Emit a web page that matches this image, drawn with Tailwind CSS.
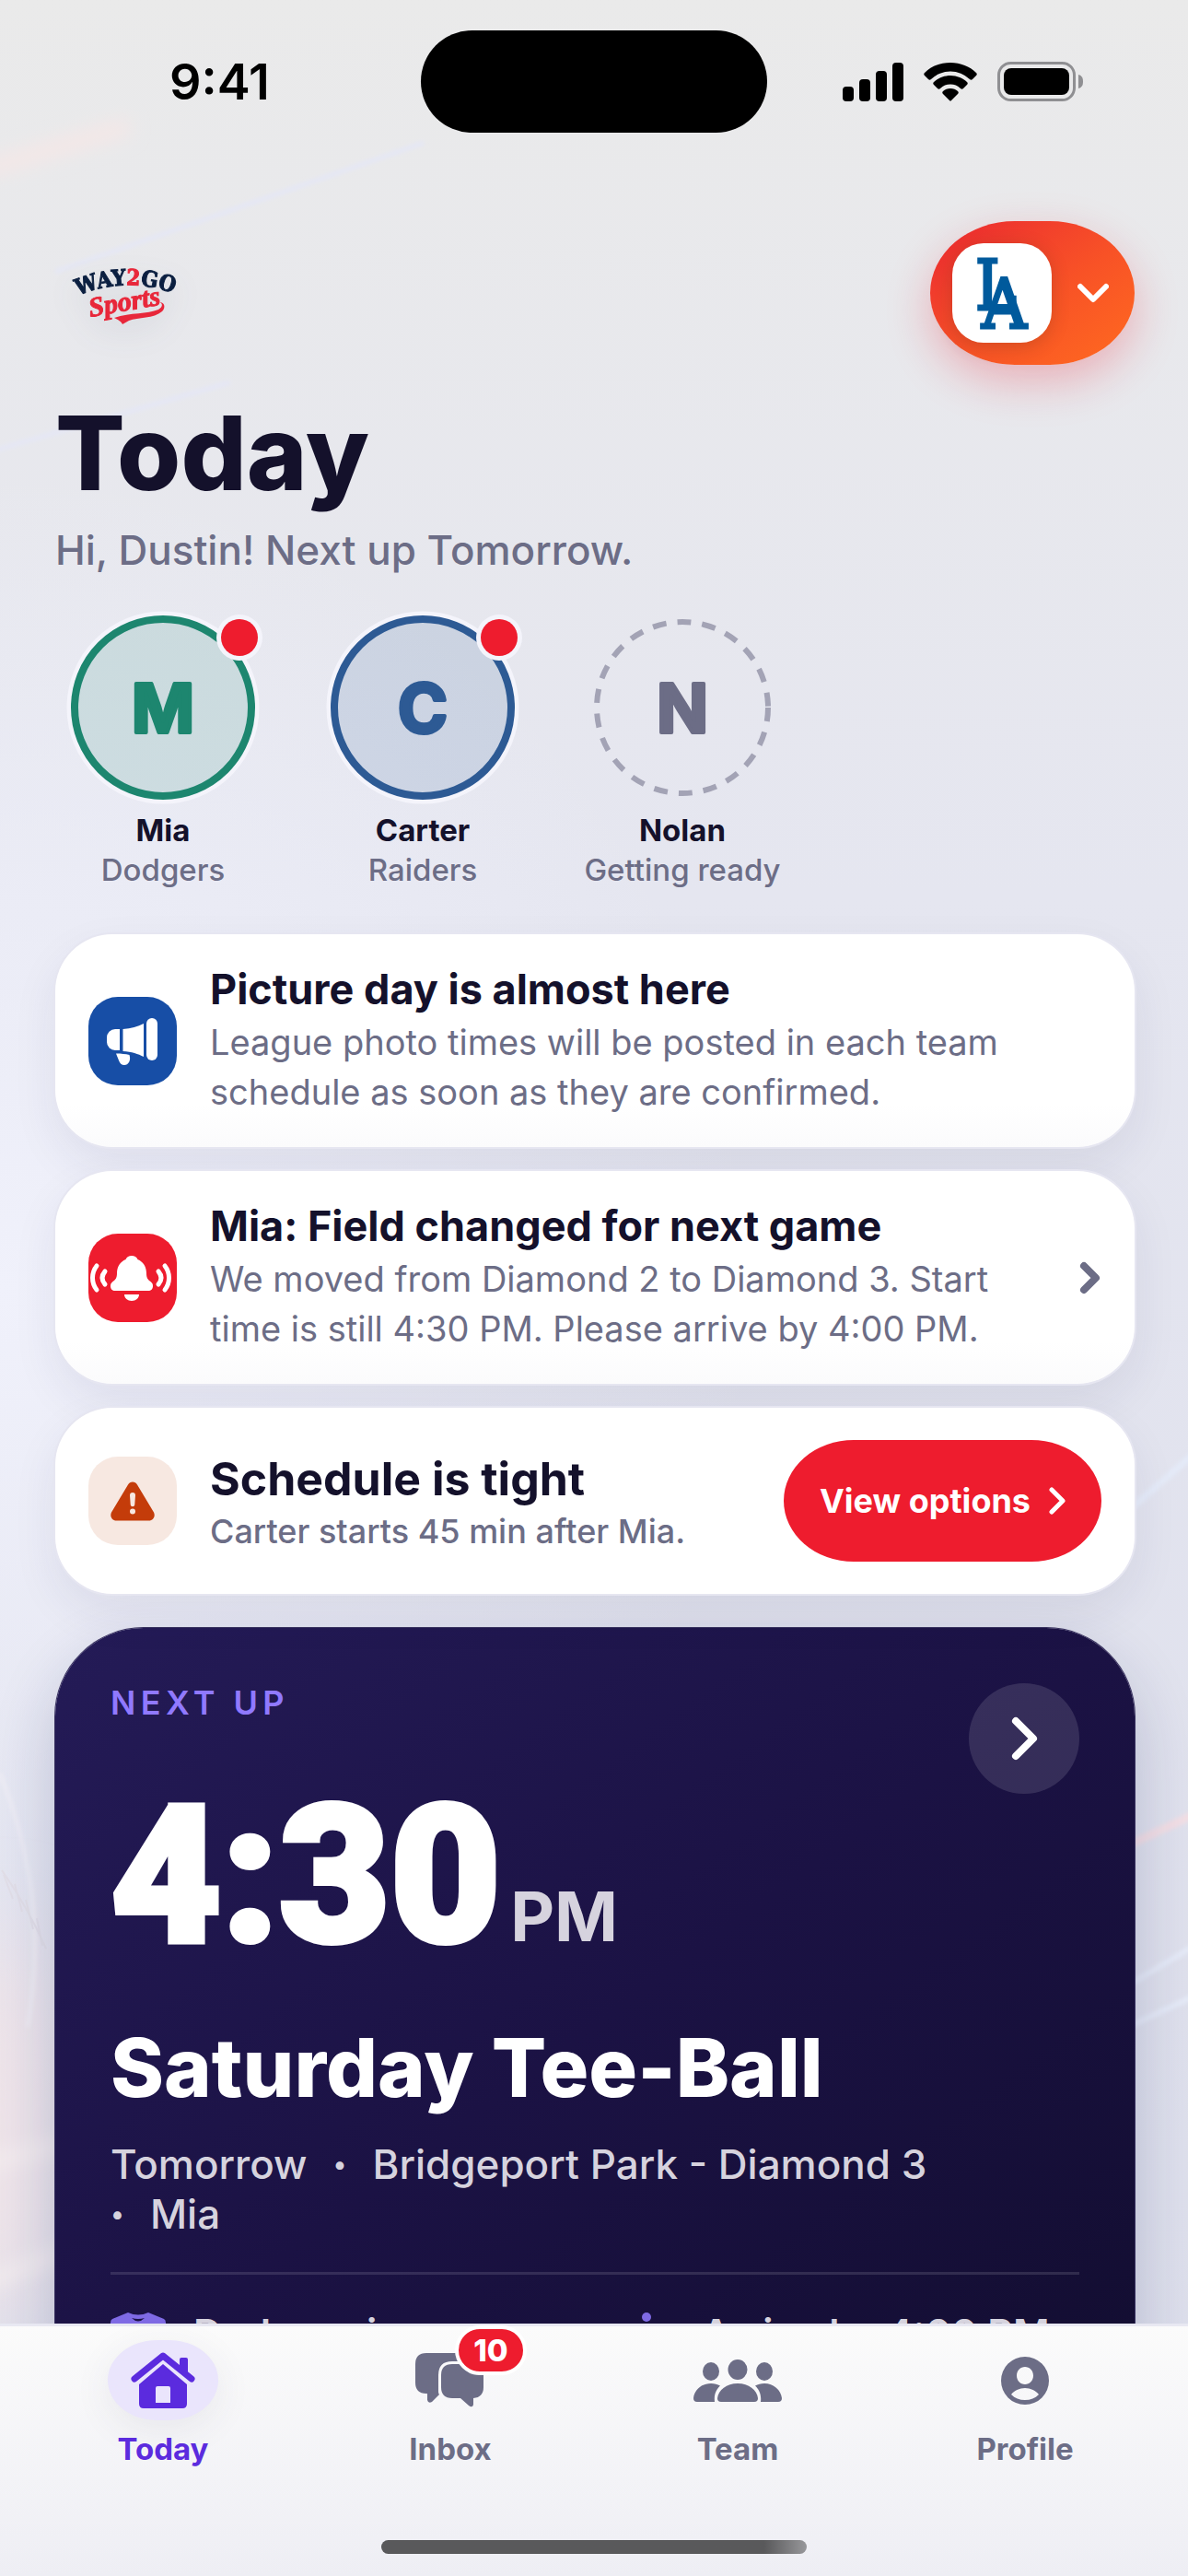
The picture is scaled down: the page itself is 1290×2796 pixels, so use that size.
<!DOCTYPE html>
<html lang="en">
<head>
  <meta charset="UTF-8" />
  <meta name="viewport" content="width=device-width, initial-scale=1.0" />
  <title>Way2Go Sports - Today</title>

  <!-- Tailwind CSS -->
  <script src="https://cdn.jsdelivr.net/npm/@tailwindcss/browser@4"></script>
</head>

<body class="relative flex h-screen flex-col overflow-hidden bg-[#e5e6ee] font-['Inter','Liberation_Sans',sans-serif] text-[#14112b]">

  <!-- Background art -->
  <div class="absolute inset-0 -z-10 bg-linear-to-b from-[#eaeaea] via-[#e5e6f0] via-35% to-[#dcdeeb]"></div>
  <div class="absolute inset-0 -z-10 bg-[radial-gradient(ellipse_at_0%_50%,#f0f1fb_0%,#f0f1fb00_45%)]"></div>
  <svg class="absolute inset-0 -z-10 size-full" viewBox="0 0 1290 2796" preserveAspectRatio="none" fill="none" aria-hidden="true">
    <defs>
      <filter id="soft" x="-50%" y="-50%" width="200%" height="200%"><feGaussianBlur stdDeviation="10" /></filter>
      <filter id="fine" x="-20%" y="-20%" width="140%" height="140%"><feGaussianBlur stdDeviation="2" /></filter>
      <filter id="wide" x="-100%" y="-50%" width="300%" height="200%"><feGaussianBlur stdDeviation="45" /></filter>
    </defs>
    <path d="M-20 185 L140 137" stroke="#f6e7e6" stroke-width="16" filter="url(#soft)" />
    <path d="M60 295 L460 155 M-10 490 L250 415" stroke="#e5e7f5" stroke-width="5" filter="url(#fine)" />
    <ellipse cx="0" cy="2310" rx="60" ry="220" fill="#f2e5e9" filter="url(#wide)" />
    <path d="M-20 2350 L80 2325 M-20 2480 L80 2440" stroke="#f6f0f1" stroke-width="12" filter="url(#soft)" />
    <path d="M0 1925 Q55 2060 30 2200" stroke="#f1eff6" stroke-width="3" filter="url(#fine)" />
    <path d="M2 2030 Q30 2070 50 2115 M4 2035 l10 26 M16 2045 l8 30 M28 2062 l8 32 M40 2082 l6 30" stroke="#e2dfe8" stroke-width="2" />
    <path d="M1225 2003 L1300 1968" stroke="#f3dfe5" stroke-width="9" filter="url(#fine)" />
    <path d="M1225 2200 L1300 2165 M1225 2155 L1300 2110" stroke="#e6ebf8" stroke-width="6" filter="url(#fine)" />
    <path d="M1225 1640 L1300 1575" stroke="#e4eaf8" stroke-width="7" filter="url(#fine)" />
  </svg>

  <!-- Status bar -->
  <div class="grid shrink-0 grid-cols-[1fr_376px_1fr] items-center pt-[33px]">
    <div class="pl-5 text-center text-[54px] leading-[60px] font-semibold text-black">9:41</div>
    <div class="h-[111px] rounded-full bg-black"></div>
    <div class="flex items-center justify-center gap-[22px] pr-8 text-black">
      <svg class="h-[42px] w-[66px]" viewBox="0 0 66 42" fill="currentColor" aria-hidden="true">
        <rect x="0" y="26" width="12" height="16" rx="4" />
        <rect x="18" y="18" width="12" height="24" rx="4" />
        <rect x="36" y="9" width="12" height="33" rx="4" />
        <rect x="54" y="0" width="12" height="42" rx="4" />
      </svg>
      <svg class="h-[42px] w-[58px]" viewBox="0 0 58 42" fill="currentColor" aria-hidden="true">
        <path d="M29 0C40 0 50 4 57 11c1 1 1 2 0 3l-4 4c-1 1-2 1-3 0A30 30 0 0 0 8 18c-1 1-2 1-3 0l-4-4c-1-1-1-2 0-3C8 4 18 0 29 0Z" />
        <path d="M29 14c7 0 14 3 18 7 1 1 1 2 0 3l-4 4c-1 1-2 1-3 0a16 16 0 0 0-22 0c-1 1-2 1-3 0l-4-4c-1-1-1-2 0-3 4-4 11-7 18-7Z" />
        <path d="M29 28c3 0 6 1 8 3 1 1 1 2 0 3l-7 7c-1 1-1 1-2 0l-7-7c-1-1-1-2 0-3 2-2 5-3 8-3Z" />
      </svg>
      <svg class="h-[43px] w-[94px]" viewBox="0 0 94 43" aria-hidden="true">
        <rect x="1.5" y="1.5" width="82" height="40" rx="13" fill="none" stroke="#8f8f92" stroke-width="3" />
        <rect x="7" y="7" width="71" height="29" rx="8" fill="#000" />
        <path d="M88 14c4 1 5 4 5 7.500s-1 6.500-5 7.500Z" fill="#8f8f92" />
      </svg>
    </div>
  </div>

  <main class="min-h-0 flex-1 overflow-hidden pt-24 pr-[58px] pl-[60px]">

    <!-- Brand and team switcher -->
    <header class="flex items-center justify-between">
      <svg class="h-[150px] w-[150px] drop-shadow-[0_12px_16px_rgba(60,70,110,0.12)]" viewBox="0 0 150 150" role="img" aria-label="Way2Go Sports">
        <path id="arch" d="M25 78 Q76 56 130 76" fill="none" />
        <text class="font-['DejaVu_Serif_Condensed','DejaVu_Serif',serif] font-bold" font-size="24" fill="#0b1f40" stroke="#0b1f40" stroke-width="1">
          <textPath href="#arch">WAY<tspan fill="#e8273a" stroke="#e8273a">2</tspan>GO</textPath>
        </text>
        <text class="font-['Liberation_Serif',serif] font-bold italic" x="38" y="101" font-size="30" fill="#e8273a" stroke="#e8273a" stroke-width="1" transform="rotate(-10 38 101)">Sports</text>
        <path d="M64 102c18-6 36-4 48-9 5-3 5-7 1-8 6 0 7 6 3 10-9 8-26 6-36 10l-7 4c-1-3-5-5-9-7Z" fill="#e8273a" />
      </svg>

      <button type="button" aria-label="Switch team, Dodgers selected" class="flex h-[156px] w-[222px] items-center gap-[28px] rounded-[92px/78px] bg-linear-to-br from-[#ea2330] via-[#f85226] via-55% to-[#ff6a1f] pl-6 shadow-[0_18px_48px_rgba(237,28,46,0.28)]">
        <span class="flex size-[108px] items-center justify-center rounded-[34px] bg-white shadow-[0_4px_20px_rgba(60,40,20,0.2)]">
          <svg class="size-[108px]" viewBox="0 0 108 108" aria-hidden="true">
            <g class="font-['DejaVu_Serif_Condensed','DejaVu_Serif',serif] font-normal" font-size="75" fill="#005a9c" stroke="#005a9c" stroke-width="3">
              <text x="25" y="72">L</text>
              <text x="32" y="92">A</text>
            </g>
          </svg>
        </span>
        <svg class="h-[22px] w-[34px]" viewBox="0 0 34 22" fill="none" stroke="#fff" stroke-width="6" stroke-linecap="round" stroke-linejoin="round" aria-hidden="true"><path d="M3 4l14 14L31 4" /></svg>
      </button>
    </header>

    <!-- Greeting -->
    <h1 class="mt-[35px] text-[112px] leading-[120px] font-extrabold">Today</h1>
    <p class="mt-[19px] text-[44px] leading-[54px] font-medium text-[#6c6d86]">Hi, Dustin! Next up Tomorrow.</p>

    <!-- Kids -->
    <section class="mt-10 flex gap-12 text-center" aria-label="Kids">
      <div class="w-[234px]">
        <svg class="mx-auto size-[208px] overflow-visible" viewBox="0 0 208 208" aria-hidden="true">
          <circle cx="104" cy="104" r="102" fill="none" stroke="#f4f4fb" stroke-width="5" />
          <circle cx="104" cy="104" r="96" fill="#1d866f" fill-opacity="0.14" stroke="#1d866f" stroke-width="8" />
          <text x="104" y="131" text-anchor="middle" font-size="73" class="font-bold" fill="#1d866f" stroke="#1d866f" stroke-width="4" stroke-linejoin="round">M</text>
          <circle cx="187" cy="28" r="25" fill="#f4f4fb" />
          <circle cx="187" cy="28" r="20" fill="#ee1c2e" />
        </svg>
        <p class="mt-2 text-[33px] leading-[42px] font-bold">Mia</p>
        <p class="mt-px text-[33px] leading-[42px] font-medium text-[#6c6d86]">Dodgers</p>
      </div>
      <div class="w-[234px]">
        <svg class="mx-auto size-[208px] overflow-visible" viewBox="0 0 208 208" aria-hidden="true">
          <circle cx="104" cy="104" r="102" fill="none" stroke="#f4f4fb" stroke-width="5" />
          <circle cx="104" cy="104" r="96" fill="#2d5a94" fill-opacity="0.14" stroke="#2d5a94" stroke-width="8" />
          <text x="104" y="131" text-anchor="middle" font-size="73" class="font-bold" fill="#2d5a94" stroke="#2d5a94" stroke-width="4" stroke-linejoin="round">C</text>
          <circle cx="187" cy="28" r="25" fill="#f4f4fb" />
          <circle cx="187" cy="28" r="20" fill="#ee1c2e" />
        </svg>
        <p class="mt-2 text-[33px] leading-[42px] font-bold">Carter</p>
        <p class="mt-px text-[33px] leading-[42px] font-medium text-[#6c6d86]">Raiders</p>
      </div>
      <div class="w-[234px]">
        <svg class="mx-auto size-[208px]" viewBox="0 0 208 208" aria-hidden="true">
          <circle cx="104" cy="104" r="93" fill="none" stroke="#a3a3b5" stroke-width="6" stroke-dasharray="15 12" />
          <text x="104" y="131" text-anchor="middle" font-size="73" class="font-bold" fill="#6c6d86" stroke="#6c6d86" stroke-width="4" stroke-linejoin="round">N</text>
        </svg>
        <p class="mt-2 text-[33px] leading-[42px] font-bold">Nolan</p>
        <p class="mt-px text-[33px] leading-[42px] font-medium whitespace-nowrap text-[#6c6d86]">Getting ready</p>
      </div>
    </section>

    <!-- Alerts -->
    <section class="mt-[49px] flex flex-col gap-[26px]" aria-label="Alerts">
      <article class="flex items-center gap-9 rounded-[62px] bg-linear-to-b from-white from-80% to-[#fbfbfc] px-9 py-[33px] shadow-[0_0_0_2px_#e6e6f1,0_20px_50px_rgba(40,40,90,0.08)]">
        <div class="flex size-24 shrink-0 items-center justify-center rounded-[32px] bg-[#174ea6]">
          <svg class="size-24" viewBox="0 0 96 96" fill="#fff" aria-hidden="true">
            <path d="M34 35h-5a9 9 0 0 0-9 9v5a9 9 0 0 0 9 9h5Z" />
            <path d="M37.500 35c9-.5 16-3 22.500-6v36c-6-3-13-5.500-22.500-6Z" />
            <rect x="63" y="23" width="12" height="46" rx="6" />
            <path d="M30 61.500c6 0 10 .5 14.500 1.500 2 6-1 11-5.500 11-3 0-5-2-6-5Z" />
          </svg>
        </div>
        <div>
          <h2 class="text-[45px] leading-[54px] font-bold">Picture day is almost here</h2>
          <p class="mt-[3px] text-[38px] leading-[54px] text-[#6c6d86]">League photo times will be posted in each team<br />schedule as soon as they are confirmed.</p>
        </div>
      </article>

      <a href="#field-change" class="flex items-center gap-9 rounded-[62px] bg-linear-to-b from-white from-80% to-[#fbfbfc] px-9 py-[33px] shadow-[0_0_0_2px_#e6e6f1,0_20px_50px_rgba(40,40,90,0.08)]">
        <span class="flex size-24 shrink-0 items-center justify-center rounded-[32px] bg-[#ee1c2e]">
          <svg class="size-24" viewBox="0 0 96 96" fill="#fff" aria-hidden="true">
            <path d="M47 24c3 0 5.500 1.500 6.500 4 6 2.500 9.500 8 9.500 15 0 5 1.500 7 4.500 9 2 1.500 2.500 3 2.500 5 0 3-2 5-5 5H29c-3 0-5-2-5-5 0-2 .5-3.500 2.500-5 3-2 4.500-4 4.500-9 0-7 3.500-12.500 9.500-15 1-2.500 3.500-4 6.500-4Z" />
            <path d="M39 66h16c0 4-3.500 7-8 7s-8-3-8-7Z" />
            <g fill="none" stroke="#fff" stroke-width="5" stroke-linecap="round">
              <path d="M9 35a21 21 0 0 0 0 26M18 41q-6 7 0 14M83 35a21 21 0 0 1 0 26M76 41q6 7 0 14" />
            </g>
          </svg>
        </span>
        <span class="flex-1">
          <strong class="block text-[45px] leading-[54px] font-bold">Mia: Field changed for next game</strong>
          <span class="mt-[3px] block text-[38px] leading-[54px] text-[#6c6d86]">We moved from Diamond 2 to Diamond 3. Start<br />time is still 4:30 PM. Please arrive by 4:00 PM.</span>
        </span>
        <svg class="h-[36px] w-[24px] shrink-0" viewBox="0 0 24 36" fill="none" stroke="#6c6d86" stroke-width="8" stroke-linecap="round" stroke-linejoin="round" aria-hidden="true"><path d="M5 5l13 13L5 31" /></svg>
      </a>

      <article class="flex items-center gap-9 rounded-[62px] bg-white px-9 py-[35px] shadow-[0_0_0_2px_#e6e6f1,0_20px_50px_rgba(40,40,90,0.08)]">
        <div class="flex size-24 shrink-0 items-center justify-center rounded-[32px] bg-[#f7e8e1]">
          <svg class="h-[43px] w-[48px]" viewBox="0 0 48 43" aria-hidden="true">
            <path d="M19 3.500c2-4 8-4 10 0l18 30c2 4-.5 9-5.500 9h-35c-5 0-7.500-5-5.500-9Z" fill="#c43c0a" />
            <path d="M21 15c0-2 1-3 3-3s3 1 3 3l-.7 10c-.2 3-4.400 3-4.600 0Z" fill="#f7e8e1" />
            <circle cx="24" cy="32.500" r="3" fill="#f7e8e1" />
          </svg>
        </div>
        <div class="flex-1 pt-1.5">
          <h2 class="text-[50px] leading-[60px] font-bold">Schedule is tight</h2>
          <p class="text-[36px] leading-[54px] font-medium text-[#6c6d86]">Carter starts 45 min after Mia.</p>
        </div>
        <button type="button" class="flex h-[132px] w-[345px] shrink-0 items-center justify-center gap-5 rounded-[76px/66px] bg-[#ee1c2e] text-[36px] leading-[42px] font-bold text-white">
          View options
          <svg class="h-[30px] w-[18px]" viewBox="0 0 18 30" fill="none" stroke="#fff" stroke-width="5" stroke-linecap="round" stroke-linejoin="round" aria-hidden="true"><path d="M3 3l12 12L3 27" /></svg>
        </button>
      </article>
    </section>

    <!-- Next up -->
    <section class="mt-[37px] rounded-[96px] bg-linear-to-br from-[#241b57] via-[#1b1244] to-[#120d30] p-[60px] text-white shadow-[0_0_0_1px_#38315f,0_30px_70px_rgba(20,30,90,0.2)]">
      <div class="flex items-start justify-between">
        <p class="text-[36px] leading-[42px] font-semibold tracking-[0.15em] text-[#9079ff]">NEXT UP</p>
        <button type="button" aria-label="Open event" class="flex size-[120px] items-center justify-center rounded-full bg-white/12">
          <svg class="h-[48px] w-[34px]" viewBox="0 0 30 48" fill="none" stroke="#fff" stroke-width="8" stroke-linecap="round" stroke-linejoin="round" aria-hidden="true"><path d="M6 5l19 19L6 43" /></svg>
        </button>
      </div>
      <p class="mt-[9px] flex items-baseline gap-[10px]">
        <span class="font-['Roboto','Liberation_Sans',sans-serif] text-[208px] leading-[160px] font-black [-webkit-text-stroke:6px_white]">4:30</span>
        <span class="text-[74px] leading-[80px] font-bold text-[#d6d3de]">PM</span>
      </p>
      <h2 class="mt-[72px] text-[88px] leading-[104px] font-extrabold">Saturday Tee-Ball</h2>
      <div class="mt-[26px] text-[44px] leading-[54px] font-medium text-[#d6d3de]">
        <p class="flex items-center gap-[28px]">
          <span>Tomorrow</span>
          <span class="text-[28px]">•</span>
          <span>Bridgeport Park - Diamond 3</span>
        </p>
        <p class="flex items-center gap-[28px]">
          <span class="text-[28px]">•</span>
          <span>Mia</span>
        </p>
      </div>
      <div class="mt-9 grid grid-cols-2 gap-x-[52px] border-t-3 border-white/12 pt-9 text-[43px] leading-[54px] font-semibold text-[#d6d3de]">
        <div class="flex items-start gap-[30px]">
          <svg class="mt-1 size-[60px]" viewBox="0 0 60 60" fill="#7f6ae4" aria-hidden="true">
            <path fill-rule="evenodd" d="M19 1q11 5 22 0l17 7q2 1 2 4v16h-11v28q0 3-3 3H14q-3 0-3-3V28H0V12q0-3 2-4ZM23 7q7 2 14 0-7 7-14 0Z" />
          </svg>
          <span class="whitespace-nowrap">Dodgers jersey</span>
        </div>
        <div class="flex items-start gap-[30px]">
          <svg class="mt-1 size-[60px] overflow-visible" viewBox="0 0 60 60" fill="none" stroke="#7f6ae4" stroke-width="6" stroke-linecap="round" stroke-linejoin="round" aria-hidden="true">
            <circle cx="30" cy="6" r="5" fill="#7f6ae4" stroke="none" />
            <path d="M28 18l-9 6-2 9M28 18l4 18 8 8 2 12M28 36l-6 20M31 22l5 7 8 2" />
          </svg>
          <span class="whitespace-nowrap">Arrive by 4:00 PM</span>
        </div>
      </div>
    </section>
  </main>

  <!-- Tab bar -->
  <footer class="shrink-0 border-t-3 border-[#e8e8f2] bg-linear-to-b from-[#fbfbfb] to-[#eeeef4] pt-[15px] pb-6">
    <nav class="grid grid-cols-4 px-[21px] text-[33px] leading-10 font-bold text-[#6c6d86]">
      <a href="#today" aria-current="page" class="flex flex-col items-center gap-[11px] text-[#5b2bde]">
        <span class="flex h-[87px] w-[120px] items-center justify-center rounded-[54px/44px] bg-[#eae5fc] shadow-[0_10px_40px_rgba(60,60,90,0.08)]">
          <svg class="h-[62px] w-[70px]" viewBox="0 0 70 62" fill="currentColor" aria-hidden="true">
            <path fill-rule="evenodd" d="M9 35L35 13l26 22v21q0 5-5 5H14q-5 0-5-5ZM29 37q-2 0-2 2v16h16V39q0-2-2-2Z" />
            <path d="M4 29L35 4l31 25" fill="none" stroke="#eae5fc" stroke-width="12" />
            <path d="M4 29L35 4l31 25" fill="none" stroke="currentColor" stroke-width="7" stroke-linecap="round" stroke-linejoin="round" />
            <path d="M53 8q0-2 2-2h5q2 0 2 2v16l-9-7Z" />
          </svg>
        </span>
        Today
      </a>
      <a href="#inbox" class="flex flex-col items-center gap-[11px]">
        <span class="relative flex h-[87px] w-[120px] items-center justify-center">
          <svg class="h-[60px] w-[76px]" viewBox="0 0 76 60" fill="currentColor" aria-hidden="true">
            <path d="M12 0h38q12 0 12 9H40Q25 9 25 24v18q0 2 1 3l-8 8q-4 2-5-2v-7h-1Q0 44 0 32V12Q0 0 12 0Z" />
            <path d="M40 12h22q12 0 12 12v13q0 11-11 12v7q-1 4-5 1l-9-8h-9q-12 0-12-12V24q0-12 12-12Z" />
          </svg>
          <span class="absolute -top-[16px] left-[65px] flex h-[54px] w-[78px] items-center justify-center rounded-full border-4 border-white bg-[#ee1c2e] font-extrabold text-white">10</span>
        </span>
        Inbox
      </a>
      <a href="#team" class="flex flex-col items-center gap-[11px]">
        <span class="flex h-[87px] w-[120px] items-center justify-center">
          <svg class="h-[46px] w-[96px]" viewBox="0 0 96 46" fill="currentColor" aria-hidden="true">
            <ellipse cx="48" cy="11" rx="10.500" ry="11" />
            <ellipse cx="19" cy="13" rx="9" ry="10" />
            <ellipse cx="77" cy="13" rx="9" ry="10" />
            <path d="M30 46q-4 0-4-4C27 33 36 26 48 26s21 7 22 16q0 4-4 4Z" />
            <path d="M4 46q-4 0-4-4c1-9 9-16 19-16 4 0 7 1 10 2.500-4 4-7 9-6 17.500ZM92 46q4 0 4-4c-1-9-9-16-19-16-4 0-7 1-10 2.500 4 4 7 9 6 17.500Z" />
          </svg>
        </span>
        Team
      </a>
      <a href="#profile" class="flex flex-col items-center gap-[11px]">
        <span class="flex h-[87px] w-[120px] items-center justify-center">
          <svg class="size-[52px]" viewBox="0 0 52 52" fill="currentColor" aria-hidden="true">
            <path fill-rule="evenodd" d="M26 0a26 26 0 1 0 0 52 26 26 0 0 0 0-52Zm0 11c5 0 9 4 9 9.500S31 30 26 30s-9-4-9-9.500S21 11 26 11Zm0 23c6 0 12 3 15 7-4 4-9 6-15 6s-11-2-15-6c3-4 9-7 15-7Z" />
          </svg>
        </span>
        Profile
      </a>
    </nav>
    <div class="mx-auto mt-[79px] h-[15px] w-[462px] rounded-full bg-linear-to-r from-[#59595b] from-90% to-[#98989b]"></div>
  </footer>
</body>
</html>
